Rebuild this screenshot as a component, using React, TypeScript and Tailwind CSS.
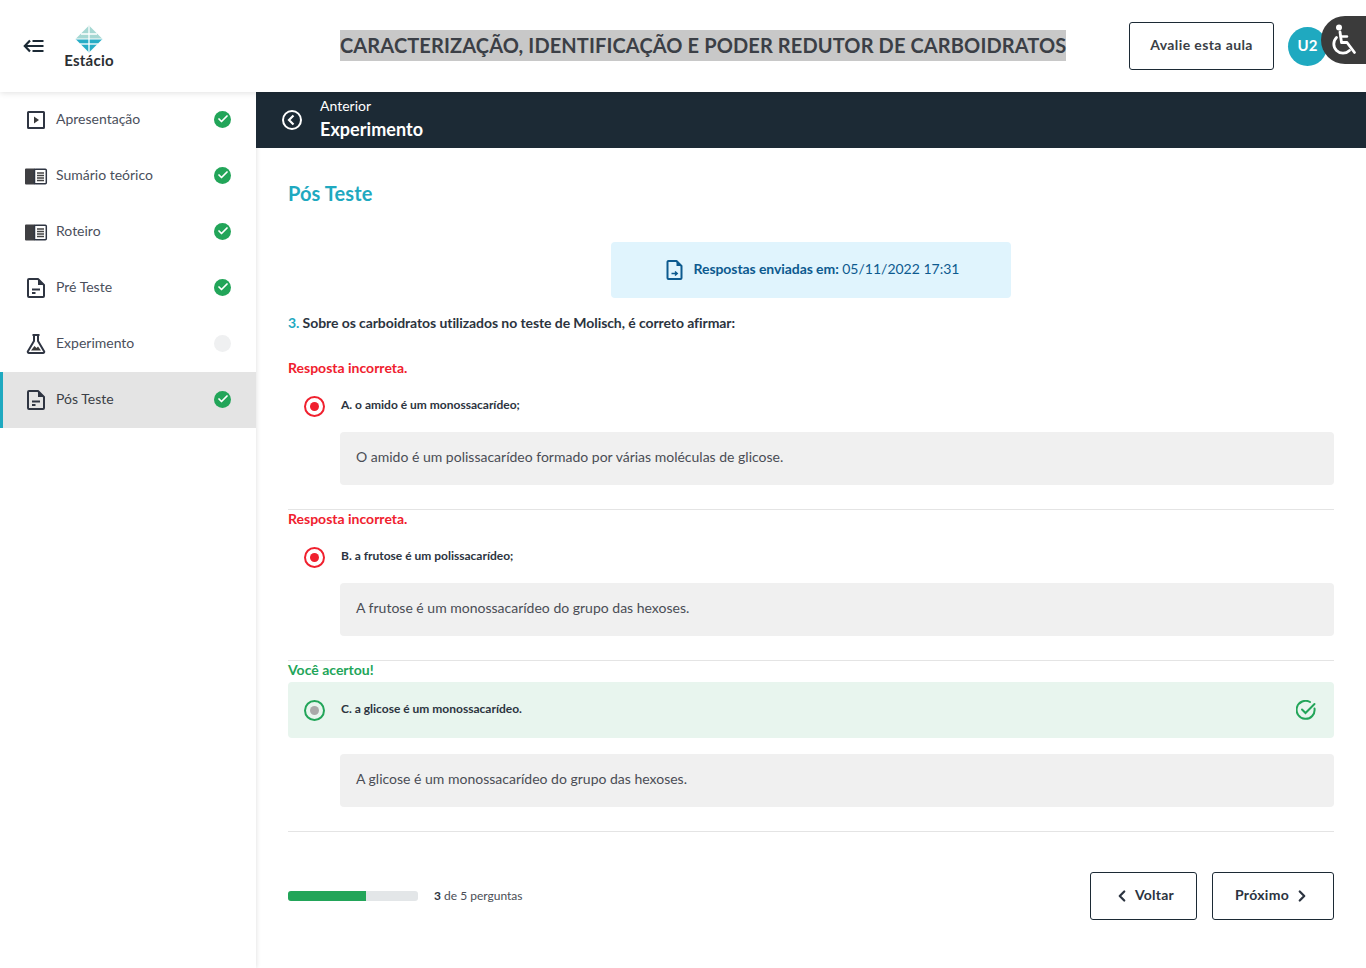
import { Check, ChevronLeft, ChevronRight } from "lucide-react";

type Item = { label: string; icon: "play" | "book" | "doc" | "flask"; done: boolean; active?: boolean };

const items: Item[] = [
  { label: "Apresentação", icon: "play", done: true },
  { label: "Sumário teórico", icon: "book", done: true },
  { label: "Roteiro", icon: "book", done: true },
  { label: "Pré Teste", icon: "doc", done: true },
  { label: "Experimento", icon: "flask", done: false },
  { label: "Pós Teste", icon: "doc", done: true, active: true },
];

function NavIcon({ icon }: { icon: Item["icon"] }) {
  if (icon === "play") {
    return (
      <svg width="24" height="24" viewBox="0 0 24 24" fill="none">
        <rect x="4" y="4" width="16" height="16" rx="0.5" stroke="#2f3542" strokeWidth="2" />
        <path d="M10 8.5 L15 12 L10 15.5 Z" fill="#3a3a3a" />
      </svg>
    );
  }
  if (icon === "book") {
    return (
      <svg width="24" height="24" viewBox="0 0 24 24" fill="none">
        <path d="M1 5.5 a1 1 0 0 1 1-1 H11 V20.5 H2 a1 1 0 0 1-1-1 Z" fill="#3f3f42" />
        <rect x="10.5" y="5.2" width="11.8" height="14.6" rx="1" fill="#fff" stroke="#2f3542" strokeWidth="1.5" />
        <path d="M13 9h7M13 11.5h7M13 14h7M13 16.5h7" stroke="#444" strokeWidth="1.3" />
      </svg>
    );
  }
  if (icon === "flask") {
    return (
      <svg width="24" height="24" viewBox="0 0 24 24" fill="none">
        <path d="M8.5 3h7M10 3v6L3.8 19.4A1.2 1.2 0 0 0 4.9 21h14.2a1.2 1.2 0 0 0 1.1-1.6L14 9V3" stroke="#2f3542" strokeWidth="2" strokeLinejoin="round" />
        <path d="M7 18.5 L10.5 14 L12.5 16 L14 14.5 L17 18.5 Z" fill="#3a3a3a" />
      </svg>
    );
  }
  return (
    <svg width="24" height="24" viewBox="0 0 24 24" fill="none">
      <path d="M5 3h9l6 6v11a1 1 0 0 1-1 1H5a1 1 0 0 1-1-1V4a1 1 0 0 1 1-1Z" stroke="#2f3542" strokeWidth="2" strokeLinejoin="round" />
      <path d="M14 3v6h6Z" fill="#2f3542" />
      <path d="M8 13.5h8M8 17h3.5" stroke="#2f3542" strokeWidth="2" />
    </svg>
  );
}

function Radio({ tone }: { tone: "red" | "green" }) {
  const ring = tone === "red" ? "border-[#f0202e]" : "border-[#22a559]";
  const dot = tone === "red" ? "bg-[#f0202e]" : "bg-[#a9a9a9]";
  return (
    <span className={`flex h-[21px] w-[21px] items-center justify-center rounded-full border-2 ${ring}`}>
      <span className={`h-[9px] w-[9px] rounded-full ${dot}`} />
    </span>
  );
}

function Answer({ label, feedback }: { label: string; feedback: string }) {
  return (
    <div>
      <div className="flex h-5 items-center pb-1 text-[14px] font-bold text-[#f0202e]">Resposta incorreta.</div>
      <div className="mt-[1px] flex h-[52px] items-center pl-4">
        <Radio tone="red" />
        <span className="ml-4 pb-[2px] text-[12px] font-bold text-[#2c3440]">{label}</span>
      </div>
      <Feedback text={feedback} />
    </div>
  );
}

function Feedback({ text }: { text: string }) {
  return (
    <div className="ml-[52px] flex h-[53px] items-center rounded bg-[#f0f0f0] px-4 pb-1 text-[14px] text-[#4a4d55]">{text}</div>
  );
}

export default function App() {
  return (
    <div className="flex min-h-[968px] flex-col bg-white font-['Lato','Liberation_Sans',sans-serif]">
      <header className="relative z-10 flex h-[92px] shrink-0 items-center bg-white shadow-[0_1px_6px_rgba(0,0,0,0.12)]">
        <svg className="ml-[23px]" width="21" height="14" viewBox="0 0 21 14" fill="none">
          <path d="M7 1.5 L1.8 7 L7 12.5M2 7h18.5M9.5 2h11M9.5 12h11" stroke="#1c2a35" strokeWidth="2.2" />
        </svg>
        <div className="ml-[13px] flex w-[64px] flex-col items-center">
          <svg width="28" height="28" viewBox="0 0 28 28">
            <path d="M14 0.5 L27.5 14 H0.5 Z" fill="#a6d8d3" />
            <path d="M0.5 14 H27.5 L14 27.5 Z" fill="#27adc6" />
            <path d="M14 1V27M6 9H22" stroke="#fff" strokeWidth="1.3" />
            <path d="M0.5 14H27.5" stroke="#fff" strokeWidth="1" />
            <path d="M5 19H23" stroke="#fff" strokeWidth="1.3" />
          </svg>
          <span className="text-[15px] leading-[15px] font-bold tracking-[0.25px] text-[#2b2f33]">Estácio</span>
        </div>
        <div className="mb-[1px] ml-[219px] bg-[#c8c8c8] text-[20px] leading-[31px] font-bold tracking-[0.115px] whitespace-nowrap text-[#3b3f46]">
          CARACTERIZAÇÃO, IDENTIFICAÇÃO E PODER REDUTOR DE CARBOIDRATOS
        </div>
        <button className="ml-auto h-12 w-[145px] rounded-[3px] border border-[#1c2a35] pb-1 text-[14px] font-bold tracking-[0.4px] text-[#3b3f46]">
          Avalie esta aula
        </button>
        <div className="mr-[39px] ml-[14px] flex h-[39px] w-[39px] items-center justify-center rounded-full bg-[#1fa9c0] pb-[2px] text-[15px] font-bold text-white">
          U2
        </div>
        <div className="absolute top-4 right-0 flex h-12 w-[45px] items-center rounded-l-[24px] bg-[#3b3b3b] pl-[11px]">
          <svg width="26" height="32" viewBox="0 0 26 32" fill="none">
            <circle cx="7" cy="3.5" r="3" fill="#fff" />
            <path d="M8 8 L9.5 18.5 H15 L22.5 28.5" stroke="#fff" strokeWidth="2.8" strokeLinecap="round" strokeLinejoin="round" />
            <path d="M9 12.5h6" stroke="#fff" strokeWidth="2.4" strokeLinecap="round" />
            <path d="M4.5 13.5a8.7 8.7 0 1 0 13 13" stroke="#fff" strokeWidth="2.8" strokeLinecap="round" />
          </svg>
        </div>
      </header>

      <div className="flex flex-1">
        <aside className="w-[256px] shrink-0 shadow-[1px_0_4px_rgba(0,0,0,0.1)]">
          {items.map((item) => (
            <div
              key={item.label}
              className={`flex h-14 items-center pr-[25px] pl-6 ${item.active ? "border-l-[3px] border-[#1fa9c0] bg-[#e4e4e4] pl-[21px] text-[#3b3f46]" : "text-[#4a4f5c]"}`}
            >
              <NavIcon icon={item.icon} />
              <span className="ml-2 flex-1 pb-1 text-[14px]">{item.label}</span>
              {item.done ? (
                <span className="mb-[2px] flex h-[17px] w-[17px] items-center justify-center rounded-full bg-[#22a559]">
                  <Check size={12} strokeWidth={3.5} color="#fff" />
                </span>
              ) : (
                <span className="mb-[2px] h-[17px] w-[17px] rounded-full bg-[#eff0f1]" />
              )}
            </div>
          ))}
        </aside>

        <main className="min-w-0 flex-1">
          <div className="flex h-14 items-center bg-[#1c2a35] pl-[26px] text-white">
            <svg width="20" height="20" viewBox="0 0 20 20" fill="none">
              <circle cx="10" cy="10" r="9" stroke="#fff" strokeWidth="2" />
              <path d="M11.5 5.5 L7 10 L11.5 14.5" stroke="#fff" strokeWidth="2.2" />
            </svg>
            <div className="ml-[18px] pb-[2px]">
              <div className="text-[14px] leading-[20px]">Anterior</div>
              <div className="text-[18px] leading-[26px] font-bold tracking-[0.05px]">Experimento</div>
            </div>
          </div>

          <div className="px-8">
            <h1 className="mt-[31px] text-[20px] leading-[28px] font-bold tracking-[0.1px] text-[#1fa9c0]">Pós Teste</h1>

            <div className="mx-auto mt-[35px] flex h-14 w-[400px] items-center justify-center rounded bg-[#e0f4fd] pl-[3px] text-[14px] text-[#0d5a8f]">
              <svg width="18" height="20" viewBox="0 0 18 20" fill="none">
                <path d="M2.5 1h8l5 5v12a1 1 0 0 1-1 1h-12a1 1 0 0 1-1-1V2a1 1 0 0 1 1-1Z" stroke="#0d5a8f" strokeWidth="2" strokeLinejoin="round" />
                <path d="M10.5 1v5h5Z" fill="#0d5a8f" />
                <path d="M5.5 13.5h5.5M9 11.5l2.2 2-2.2 2" stroke="#0d5a8f" strokeWidth="1.5" />
              </svg>
              <span className="ml-[10px] pb-1"><b className="font-bold tracking-[-0.08px]">Respostas enviadas em:</b> 05/11/2022 17:31</span>
            </div>

            <p className="mt-[15px] text-[14px] leading-5 font-bold tracking-[-0.08px] text-[#2c3440]">
              <span className="text-[#1fa9c0]">3.</span> Sobre os carboidratos utilizados no teste de Molisch, é correto afirmar:
            </p>

            <div className="mt-[26px] border-b border-[#e4e4e4] pb-6">
              <Answer label="A. o amido é um monossacarídeo;" feedback="O amido é um polissacarídeo formado por várias moléculas de glicose." />
            </div>
            <div className="border-b border-[#e4e4e4] pb-6">
              <Answer label="B. a frutose é um polissacarídeo;" feedback="A frutose é um monossacarídeo do grupo das hexoses." />
            </div>
            <div className="border-b border-[#e4e4e4] pb-6">
              <div className="flex h-5 items-center pb-1 text-[14px] font-bold text-[#22a559]">Você acertou!</div>
              <div className="mt-[1px] flex h-14 items-center rounded bg-[#e8f5ee] pr-[18px] pl-4">
                <Radio tone="green" />
                <span className="ml-4 flex-1 pb-[2px] text-[12px] font-bold text-[#2c3440]">C. a glicose é um monossacarídeo.</span>
                <svg width="20" height="20" viewBox="0 0 20 20" fill="none">
                  <path d="M18.5 8.5A9 9 0 1 1 14 2" stroke="#22a559" strokeWidth="2" strokeLinecap="round" />
                  <path d="M6 9.5l3.5 3.5L18.5 4" stroke="#22a559" strokeWidth="2" strokeLinecap="round" />
                </svg>
              </div>
              <div className="mt-4">
                <Feedback text="A glicose é um monossacarídeo do grupo das hexoses." />
              </div>
            </div>

            <div className="mt-10 flex items-center">
              <div className="h-[10px] w-[130px] overflow-hidden rounded-[3px] bg-[#e3e6e8]">
                <div className="h-full w-[78px] bg-[#22a559]" />
              </div>
              <span className="ml-4 flex-1 text-[12px] text-[#4a4d55]">
                <b className="font-bold text-[#2c3440]">3</b> de 5 perguntas
              </span>
              <button className="flex h-12 w-[107px] items-center justify-center rounded-[3px] border border-[#1c2a35] text-[14px] font-bold tracking-[0.2px] text-[#2c3440]">
                <ChevronLeft size={18} strokeWidth={3} className="mr-[4px]" />
                <span className="pb-1">Voltar</span>
              </button>
              <button className="ml-[15px] flex h-12 w-[122px] items-center justify-center rounded-[3px] border border-[#1c2a35] text-[14px] font-bold tracking-[0.3px] text-[#2c3440]">
                <span className="pb-1">Próximo</span>
                <ChevronRight size={18} strokeWidth={3} className="ml-[4px]" />
              </button>
            </div>
          </div>
        </main>
      </div>
    </div>
  );
}
